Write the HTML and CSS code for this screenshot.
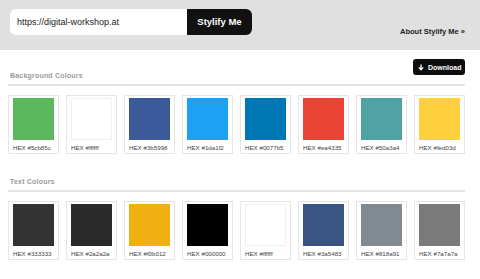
FILE: index.html
```html
<!DOCTYPE html>
<html>
<head>
<meta charset="utf-8">
<link rel="stylesheet" href="styles.css">
</head>
<body>
<header class="header">
  <div class="search">
    <div class="url">https://digital-workshop.at</div>
    <div class="go">Stylify Me</div>
  </div>
  <a class="about">About Stylify Me &raquo;</a>
</header>
<main class="main">
  <div class="head">
    <h2 class="title">Background Colours</h2>
    <span class="download"><svg width="6" height="7" viewBox="0 0 6 7"><path d="M3 0.5V5.5M0.8 3.4L3 5.8L5.2 3.4" stroke="#fff" stroke-width="1.3" fill="none"/></svg>Download</span>
  </div>
  <div class="grid">
    <div class="card"><div class="sw" style="background:#5cb85c"></div><div class="lbl">HEX #5cb85c</div></div>
    <div class="card"><div class="sw white" style="background:#ffffff"></div><div class="lbl">HEX #ffffff</div></div>
    <div class="card"><div class="sw" style="background:#3b5998"></div><div class="lbl">HEX #3b5998</div></div>
    <div class="card"><div class="sw" style="background:#1da1f2"></div><div class="lbl">HEX #1da1f2</div></div>
    <div class="card"><div class="sw" style="background:#0077b5"></div><div class="lbl">HEX #0077b5</div></div>
    <div class="card"><div class="sw" style="background:#ea4335"></div><div class="lbl">HEX #ea4335</div></div>
    <div class="card"><div class="sw" style="background:#50a3a4"></div><div class="lbl">HEX #50a3a4</div></div>
    <div class="card"><div class="sw" style="background:#fed03d"></div><div class="lbl">HEX #fed03d</div></div>
  </div>
  <div class="head second">
    <h2 class="title">Text Colours</h2>
  </div>
  <div class="grid">
    <div class="card"><div class="sw" style="background:#333333"></div><div class="lbl">HEX #333333</div></div>
    <div class="card"><div class="sw" style="background:#2a2a2a"></div><div class="lbl">HEX #2a2a2a</div></div>
    <div class="card"><div class="sw" style="background:#f0b012"></div><div class="lbl">HEX #f0b012</div></div>
    <div class="card"><div class="sw" style="background:#000000"></div><div class="lbl">HEX #000000</div></div>
    <div class="card"><div class="sw white" style="background:#ffffff"></div><div class="lbl">HEX #ffffff</div></div>
    <div class="card"><div class="sw" style="background:#3a5483"></div><div class="lbl">HEX #3a5483</div></div>
    <div class="card"><div class="sw" style="background:#818a91"></div><div class="lbl">HEX #818a91</div></div>
    <div class="card"><div class="sw" style="background:#7a7a7a"></div><div class="lbl">HEX #7a7a7a</div></div>
  </div>
</main>
</body>
</html>
```
FILE: styles.css
```css
* { box-sizing: border-box; }
body {
  margin: 0;
  background: #fff;
  font-family: "Liberation Sans", Arial, sans-serif;
  color: #222;
}
.header {
  height: 50px;
  background: #e0e0e0;
  padding: 9px 15px 0 10px;
  display: flex;
  justify-content: space-between;
  align-items: flex-start;
}
.search {
  display: flex;
  height: 26px;
}
.url {
  width: 177px;
  background: #fff;
  border-radius: 6px 0 0 6px;
  padding-left: 7px;
  font-size: 9px;
  line-height: 26px;
  color: #222;
}
.go {
  width: 65px;
  background: #111;
  color: #fff;
  border-radius: 0 6px 6px 0;
  font-weight: bold;
  font-size: 9.5px;
  line-height: 26px;
  text-align: center;
}
.about {
  margin-top: 18px;
  font-size: 7.5px;
  font-weight: bold;
  color: #222;
  line-height: 10px;
}
.main {
  padding: 9px 15px 0 8px;
}
.head {
  display: flex;
  justify-content: space-between;
  align-items: flex-end;
  border-bottom: 2px solid #e4e4e4;
}
.head.second { margin-top: 23px; }
.title {
  margin: 0 0 3px 2px;
  font-size: 7px;
  line-height: 10px;
  font-weight: bold;
  color: #9a9a9a;
  letter-spacing: 0.2px;
}
.download {
  display: flex;
  align-items: center;
  gap: 4px;
  height: 16px;
  width: 52px;
  margin-bottom: 9px;
  padding-left: 5px;
  background: #0d0d0d;
  color: #fff;
  border-radius: 3px;
  font-size: 7px;
  font-weight: bold;
}
.grid {
  display: grid;
  grid-template-columns: repeat(8, 51px);
  gap: 7px;
  margin-top: 9px;
}
.card {
  height: 59px;
  border: 1px solid #e6e6e6;
  padding: 2px 4px 0 4px;
}
.sw { height: 42px; }
.sw.white { box-shadow: inset 0 0 0 1px #efefef; }
.lbl {
  margin-top: 4px;
  font-size: 6.2px;
  line-height: 8px;
  color: #444;
}
```
